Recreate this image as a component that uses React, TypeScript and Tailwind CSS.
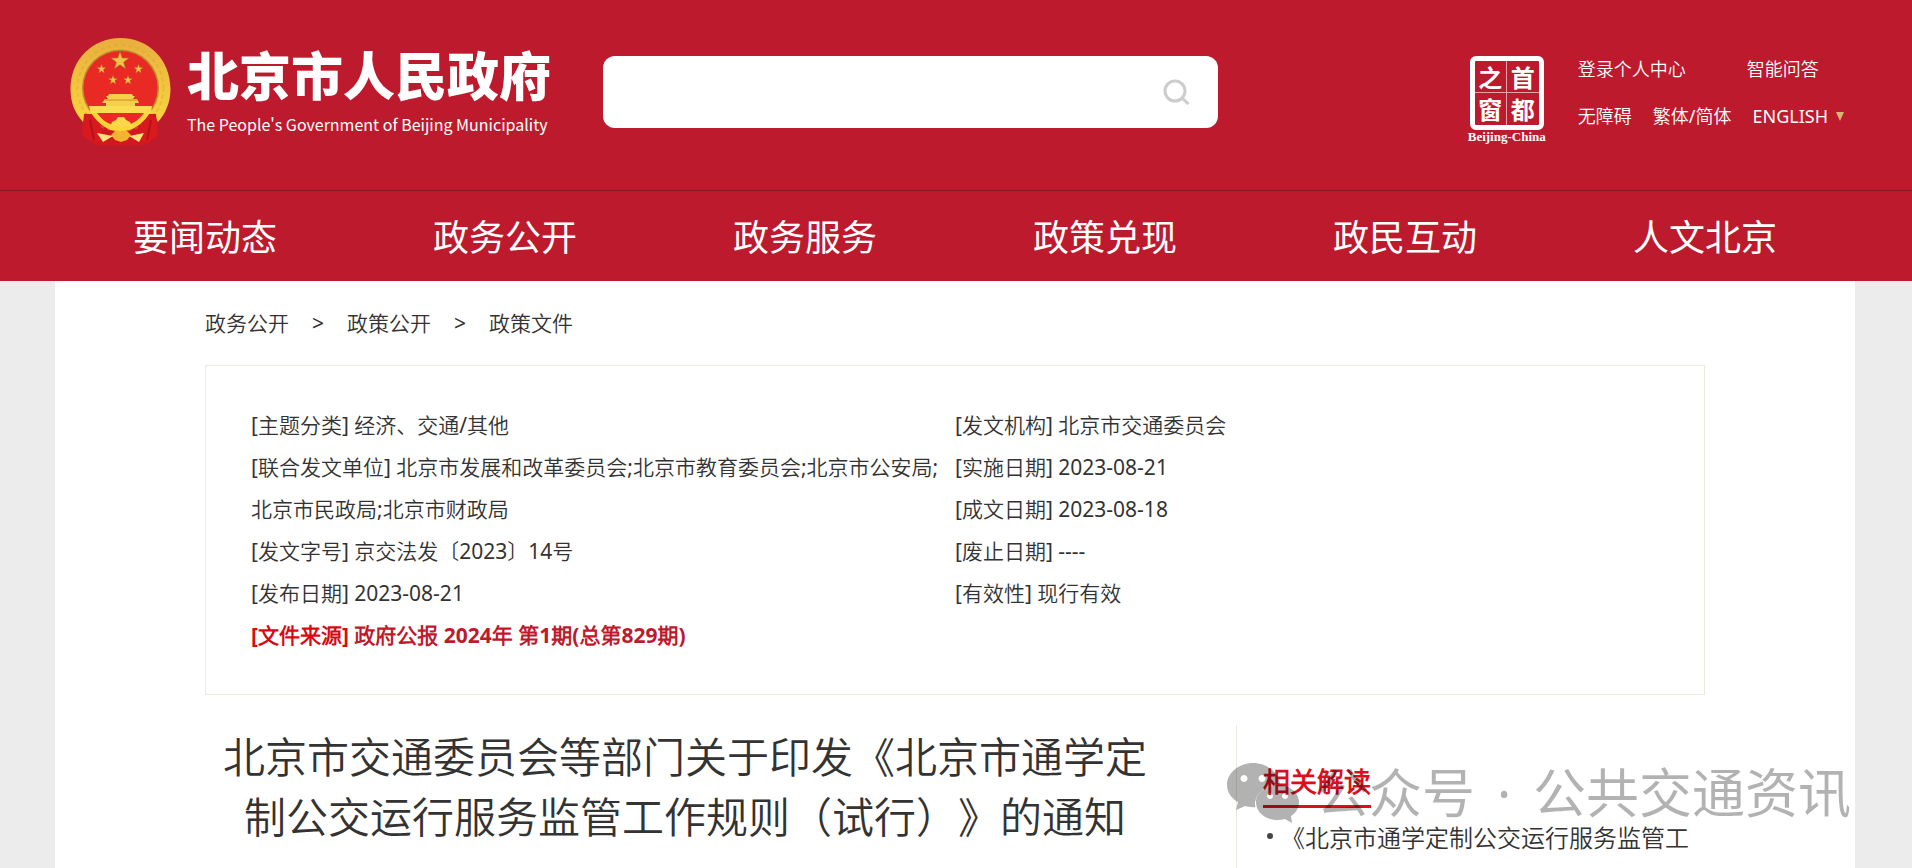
import { useState } from "react";

const navItems = ["要闻动态", "政务公开", "政务服务", "政策兑现", "政民互动", "人文北京"];

const crumbs = ["政务公开", "政策公开", "政策文件"];

const leftInfo = [
  { label: "主题分类", value: "经济、交通/其他" },
  {
    label: "联合发文单位",
    value: "北京市发展和改革委员会;北京市教育委员会;北京市公安局;北京市民政局;北京市财政局",
  },
  { label: "发文字号", value: "京交法发〔2023〕14号" },
  { label: "发布日期", value: "2023-08-21" },
];

const rightInfo = [
  { label: "发文机构", value: "北京市交通委员会" },
  { label: "实施日期", value: "2023-08-21" },
  { label: "成文日期", value: "2023-08-18" },
  { label: "废止日期", value: "----" },
  { label: "有效性", value: "现行有效" },
];

const STAR = "M0 -10 L2.4 -3.2 L9.5 -3.1 L3.8 1.3 L5.9 8.1 L0 4 L-5.9 8.1 L-3.8 1.3 L-9.5 -3.1 L-2.4 -3.2 Z";

function Emblem() {
  return (
    <svg viewBox="0 0 101 108" className="h-[108px] w-[101px] shrink-0" aria-hidden="true">
      <defs>
        <linearGradient id="gold" x1="0" y1="0" x2="0" y2="1">
          <stop offset="0" stopColor="#e8ae3e" />
          <stop offset="0.5" stopColor="#f2c440" />
          <stop offset="1" stopColor="#fbd93c" />
        </linearGradient>
      </defs>
      {/* red silk on both sides of the wreath */}
      <path d="M15 75 L14 87 L12 97 L20 103 L26 107 L75 107 L88 99 L85 76 Z" fill="#d3171e" />
      <path
        d="M50.500 0 C79 0 100.500 22 100.500 51 C100.500 65 95 76 88 84 L84 76 L74 76 L64 90 L50 94 L37 90 L27 76 L17 76 L13 84 C5 75 0.500 65 0.500 51 C0.500 22 22 0 50.500 0 Z"
        fill="url(#gold)"
      />
      <circle cx="50.5" cy="50" r="43" fill="none" stroke="#dd9f2c" strokeWidth="2" strokeDasharray="4 3" opacity="0.35" />
      <circle cx="50.5" cy="50" r="38.5" fill="#b98a2c" />
      <circle cx="50.5" cy="50" r="37" fill="#e92a24" />
      <path d="M14 76 Q24 74 30 88 L35 104 L20 103 L12 97 Z M86 76 Q77 74 71 88 L66 104 L80 103 L88 98 Z" fill="#d81a1f" />
      <path d="M20 82 L24 102 M81 82 L77 102" stroke="#b5111b" strokeWidth="2" fill="none" />
      <path d="M22 72 Q34 91 50 91 Q67 91 79 72" fill="none" stroke="#fbd438" strokeWidth="5" />
      <path d="M19 68 H82 L81 75 H21 Z" fill="#fbdc52" />
      <path d="M31 77 H70 L60 84 H41 Z" fill="#e92a24" />
      <path d="M39 56 H62 L63 58 H65 L63 61 H67 L69 65 H65 V68 H36 V65 H32 L35 61 H38 L36 58 H38 Z" fill="#f6cf4c" />
      <path d="M35 62 H67" stroke="#c98a26" strokeWidth="1" />
      <path d="M40 90 L42 84 L46 82 L48 79 H54 L56 82 L60 84 L62 90 L56 88 L51 90 L46 88 Z" fill="#fdd94a" />
      <path d="M41 97 L46 92 L51 94 L56 92 L61 97 L57 102 L51 104 L45 102 Z" fill="#f3b52f" />
      <path d="M27 95 L43 98 L33 104 Z M74 95 L59 98 L69 104 Z" fill="#fbe27c" />
      <g fill="#f2c24a" stroke="#a8701e" strokeWidth="0.7">
        <path d={STAR} transform="translate(50 23) scale(0.95)" />
        <path d={STAR} transform="translate(31.5 31) scale(0.48)" />
        <path d={STAR} transform="translate(68.5 31) scale(0.48)" />
        <path d={STAR} transform="translate(43 42) scale(0.48)" />
        <path d={STAR} transform="translate(58 42) scale(0.48)" />
      </g>
    </svg>
  );
}

function CapitalWindow() {
  return (
    <a href="#" className="flex w-[82px] flex-col items-center text-white">
      <span className="grid h-[74px] w-[74px] grid-cols-2 grid-rows-2 rounded-md border-[5px] border-white font-['Noto_Sans_CJK_SC',sans-serif] text-2xl leading-[31px] font-bold">
        <span className="border-r border-b border-white/60 text-center">之</span>
        <span className="border-b border-white/60 text-center">首</span>
        <span className="border-r border-white/60 text-center">窗</span>
        <span className="text-center">都</span>
      </span>
      <span className="font-['Liberation_Serif',serif] text-[13px] leading-[14px] font-bold whitespace-nowrap">Beijing-China</span>
    </a>
  );
}

function WechatMark() {
  return (
    <svg viewBox="0 0 72 60" className="h-[60px] w-[72px] shrink-0" fill="black" aria-hidden="true">
      <path
        fillRule="evenodd"
        d="M26 0 C40 0 51 9 53 21 C39 22 28 30 28 42 L28.500 44 C25 44.500 22 44 18 43 L9 47 L11 39 C4 35 0 29 0 22 C0 10 12 0 26 0 Z M17 12 a3.500 3.500 0 1 0 0.010 0 Z M35 12 a3.500 3.500 0 1 0 0.010 0 Z"
      />
      <path
        fillRule="evenodd"
        d="M51 22 C63 22 72 30 72 39 C72 45 69 50 64 53 L65 60 L58 56 C44 60 29 52 29 39 C29 30 39 22 51 22 Z M43 30 a3 3 0 1 0 0.010 0 Z M58 30 a3 3 0 1 0 0.010 0 Z"
      />
    </svg>
  );
}

function InfoList({ items }: { items: { label: string; value: string }[] }) {
  return (
    <>
      {items.map((item) => (
        <li key={item.label}>{`[${item.label}] ${item.value}`}</li>
      ))}
    </>
  );
}

export default function App() {
  const [keyword, setKeyword] = useState("");

  return (
    <div
      lang="zh-CN"
      className="min-h-screen overflow-x-hidden bg-[#ececec] font-['Noto_Sans','Noto_Sans_CJK_SC_DemiLight','Noto_Sans_CJK_SC',sans-serif] text-[#333]"
    >
      <header className="bg-[#bd1a2d] text-white">
        <div className="pr-0.5">
          <div className="mx-auto flex h-[190px] max-w-[1800px] items-start pt-[38px] pr-[11px] pl-[15px]">
            <a href="#" className="flex shrink-0 gap-4">
              <Emblem />
              <span className="flex flex-col pt-1.5 font-['Noto_Sans_CJK_SC',sans-serif]">
                <span className="text-[52px] leading-[60px] font-black whitespace-nowrap">北京市人民政府</span>
                <span className="pt-2 text-base leading-6 whitespace-nowrap">
                  The People's Government of Beijing Municipality
                </span>
              </span>
            </a>
            <form
              className="mt-[18px] ml-[52px] flex h-[72px] w-[615px] items-center rounded-xl bg-white pr-7"
              onSubmit={(e) => e.preventDefault()}
            >
              <input
                aria-label="搜索"
                className="h-full min-w-0 flex-1 rounded-xl px-5 text-xl text-[#333] outline-none"
                value={keyword}
                onChange={(e) => setKeyword(e.target.value)}
              />
              <button type="submit" aria-label="搜索">
                <svg viewBox="0 0 27 26" className="h-[26px] w-[27px]" fill="none" stroke="#ccc" strokeWidth="3">
                  <circle cx="12" cy="12" r="10" />
                  <path d="M19 19 L25.500 25" />
                </svg>
              </button>
            </form>
            <div className="mt-[18px] ml-auto flex gap-[30px]">
              <CapitalWindow />
              <div className="flex flex-col gap-5 text-lg leading-[27px] whitespace-nowrap">
                <div className="flex gap-[61px]">
                  <a href="#">登录个人中心</a>
                  <a href="#">智能问答</a>
                </div>
                <div className="flex items-center gap-[21px]">
                  <a href="#">无障碍</a>
                  <a href="#">繁体/简体</a>
                  <a href="#" className="flex items-center gap-2">
                    ENGLISH
                    <svg viewBox="0 0 8 9" className="h-[9px] w-2" fill="#d6b472">
                      <path d="M0 0 H8 L4 9 Z" />
                    </svg>
                  </a>
                </div>
              </div>
            </div>
          </div>
        </div>
        <nav className="border-t border-[#8f1625] pr-0.5">
          <ul className="mx-auto grid max-w-[1800px] grid-cols-6 pt-1 text-center font-['Noto_Sans','Noto_Sans_CJK_SC',sans-serif] text-4xl leading-[86px]">
            {navItems.map((item) => (
              <li key={item}>
                <a href="#">{item}</a>
              </li>
            ))}
          </ul>
        </nav>
      </header>

      <div className="pr-0.5">
        <main className="mx-auto min-h-[587px] max-w-[1800px] bg-white px-[150px]">
          <nav className="flex pt-[21px] text-[21px] leading-[42px]">
            {crumbs.map((crumb, i) => (
              <span key={crumb} className="flex">
                {i > 0 && <span className="w-[58px] text-center">&gt;</span>}
                <a href="#">{crumb}</a>
              </span>
            ))}
          </nav>

          <section className="mt-[21px] flex border border-[#e9ebe0] px-[45px] py-[38px] text-[21px] leading-[42px]">
            <ul className="w-1/2">
              <InfoList items={leftInfo} />
              <li className="font-bold text-[#bd1a2d]">
                <span className="text-[#d60b14]">[文件来源]</span> 政府公报 2024年 第1期(总第829期)
              </li>
            </ul>
            <ul className="w-1/2">
              <InfoList items={rightInfo} />
            </ul>
          </section>

          <div className="flex pt-[30px]">
            <article className="w-[64%] pt-0.5">
              <h1 className="text-center text-[42px] leading-[60px] [text-spacing-trim:space-all]">
                北京市交通委员会等部门关于印发《北京市通学定制公交运行服务监管工作规则（试行）》的通知
              </h1>
            </article>
            <aside className="ml-auto w-[469px] border-l border-[#e9ebe0] pt-9 pb-4 pl-[26px]">
              <h2 className="inline-block border-b-[3px] border-[#d8111f] pb-0.5 text-[27px] leading-[42px] font-bold text-[#d8111f]">
                相关解读
              </h2>
              <ul className="pt-0.5 text-2xl">
                <li className="flex items-center whitespace-nowrap [text-spacing-trim:space-all]">
                  <span className="mx-1 size-[6px] rounded-full bg-[#444]" />
                  <a href="#" className="pt-1 pl-1 leading-[48px]">《北京市通学定制公交运行服务监管工</a>
                </li>
              </ul>
            </aside>
          </div>
        </main>
      </div>

      {/* account name laid over the page corner */}
      <div className="pointer-events-none fixed right-[61px] bottom-9 flex items-center font-['Noto_Sans','Noto_Sans_CJK_SC',sans-serif] text-[53px] leading-[78px] whitespace-nowrap text-black opacity-30">
        <WechatMark />
        <span className="ml-[17px]">公众号</span>
        <span className="w-[58px] text-center">·</span>
        <span>公共交通资讯</span>
      </div>
    </div>
  );
}
